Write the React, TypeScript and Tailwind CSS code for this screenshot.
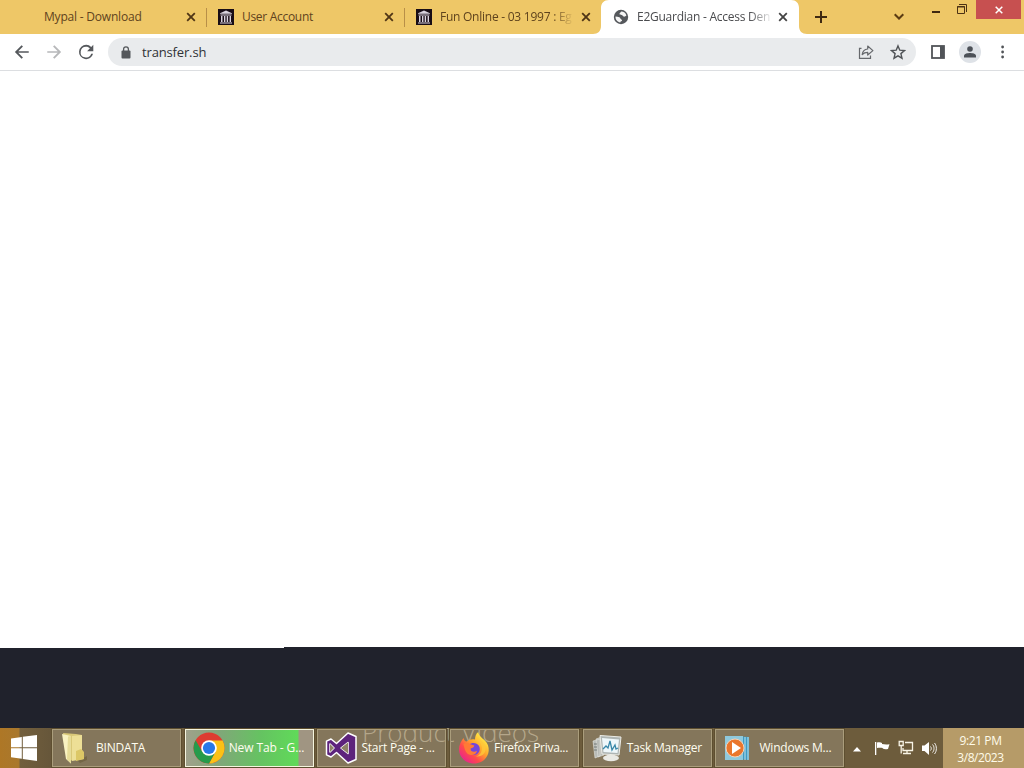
import React from 'react'

const uiFont = 'font-["Open_Sans","Noto_Sans",sans-serif]'

function CloseIcon() {
    return (
        <svg className="h-[10px] w-[10px] shrink-0" viewBox="0 0 10 10">
            <path d="M1.2 1.2l7.6 7.6M8.8 1.2L1.2 8.8" stroke="currentColor" strokeWidth="1.8" fill="none" />
        </svg>
    )
}

function ArchiveIcon() {
    return (
        <svg className="h-4 w-4" viewBox="0 0 16 16">
            <rect width="16" height="16" fill="#180d16" />
            <path d="M2 4.2L8 1.4l6 2.8v.6H2zM2.5 5.5h11v1h-11zM3 7h1.5v6H3zM6 7h1.4v6H6zM8.7 7h1.4v6H8.7zM11.6 7H13v6h-1.4zM2 13.5h12v1H2z" fill="#d9d3df" />
        </svg>
    )
}

function GlobeIcon() {
    return (
        <svg className="h-4 w-4" viewBox="0 0 16 16">
            <circle cx="8" cy="8" r="7.2" fill="#55585c" />
            <path d="M8.2 2.6c2.6 0 4.6 1.6 5.2 3.9-.9.6-1.500 1.300-2.700 1.100-1-.2-1-1.300-2-1.600-1-.4-2 .1-2.200-1 0-1 1.100-1.200 1.700-2.400z" fill="#f5f5f5" />
            <path d="M2.500 7.600c1.400.2 2.600.2 3.800.7 1.300.6 1 1.700 2.100 2.100 1 .5.8 1.600-.2 1.900-.8.2-.8.6-.9 1.200-2.700-.3-5-2.600-4.800-5.900z" fill="#f5f5f5" />
        </svg>
    )
}

function Tab(props: any) {

    const { title, icon, active, divider, textClass } = props

    return (
        <div className={`relative flex h-full shrink-0 items-center ${active ? '-ml-px w-[199px] text-[#4a4b4e]' : 'w-[198px] text-[#5f431d]'}`}>
            {active && (
                <svg className="absolute -left-2 top-0 h-[34px] w-[214px]" viewBox="0 0 214 34">
                    <path d="M0 34c5 0 8-3 8-8V8c0-5 3-8 8-8h182c5 0 8 3 8 8v18c0 5 3 8 8 8z" fill="#fff" />
                </svg>
            )}
            <div className="relative ml-3 h-4 w-4 shrink-0">{icon}</div>
            <div className={`relative ml-2 w-[133px] shrink-0 overflow-hidden whitespace-nowrap text-[12px] leading-4 ${textClass}`}>{title}</div>
            <div className={`relative flex ${active ? 'ml-[8px] text-[#444]' : divider ? 'ml-[9px] text-[#4f3516]' : 'ml-[8px] text-[#4f3516]'}`}><CloseIcon /></div>
            {divider && <div className="absolute -right-px top-2 h-[19px] w-px bg-[#b88f48]"></div>}
        </div>
    )
}

function TabStrip() {
    return (
        <div className="flex h-[34px] bg-[#eec767] pl-2">
            <Tab divider title="Mypal - Download" textClass="tracking-[-0.2px]" />
            <Tab divider title="User Account" icon={<ArchiveIcon />} textClass="tracking-[-0.3px]" />
            <Tab title="Fun Online - 03 1997 : Eg" icon={<ArchiveIcon />} textClass="tracking-[-0.25px] [mask-image:linear-gradient(to_right,#000_112px,transparent_134px)]" />
            <Tab active title="E2Guardian - Access Den" icon={<GlobeIcon />} textClass="tracking-[-0.25px] [mask-image:linear-gradient(to_right,#000_112px,transparent_136px)]" />
            <svg className="ml-[15px] mt-[11px] h-3 w-3 shrink-0" viewBox="0 0 12 12">
                <path d="M6 0v12M0 6h12" stroke="#3f2a12" strokeWidth="2" />
            </svg>
            <svg className="ml-[67px] mt-[13px] h-[8px] w-[10px] shrink-0" viewBox="0 0 10 8">
                <path d="M.7 1.2L5 5.5l4.3-4.3" stroke="#5b3c13" strokeWidth="2" fill="none" />
            </svg>
            <div className="ml-[28px] mt-[11px] h-[2px] w-2 shrink-0 bg-[#3f2811]"></div>
            <svg className="ml-[17px] mt-[4px] h-[10px] w-[10px] shrink-0" viewBox="0 0 10 10">
                <path d="M2 .5h7.5V8" stroke="#4c3214" fill="none" />
                <path d="M.5 2.5h7v7h-7zM0 3h8" stroke="#4c3214" fill="none" />
            </svg>
            <div className="ml-[9px] flex h-[19px] w-[45px] shrink-0 items-center justify-center bg-[#c75050] text-white">
                <svg className="h-[8px] w-[8px]" viewBox="0 0 8 8">
                    <path d="M.7.7l6.6 6.6M7.3.7L.7 7.3" stroke="currentColor" strokeWidth="1.5" />
                </svg>
            </div>
        </div>
    )
}

function Toolbar() {
    return (
        <div className="flex h-[37px] shrink-0 items-center border-b border-[#dcdee1] bg-white pl-[12px]">
            <svg className="h-5 w-5" viewBox="-.6 -.6 25.2 25.2" fill="#55585c">
                <path d="M20.5 11H7.3l5.9-5.9L11.5 3.5 3 12l8.5 8.5 1.7-1.6L7.3 13h13.2z" />
            </svg>
            <svg className="ml-3 h-5 w-5" viewBox="-.6 -.6 25.2 25.2" fill="#b7b8ba">
                <path d="M3.5 11h13.2l-5.9-5.9 1.7-1.6L21 12l-8.5 8.5-1.7-1.6 5.9-5.9H3.5z" />
            </svg>
            <svg className="ml-3 h-5 w-5" viewBox="-.8 -.6 25.2 25.2" fill="#55585c">
                <path d="M18.4 5.6A9 9 0 0012 3a9 9 0 108.7 11.3h-2.4A6.8 6.8 0 1112 5.3c1.9 0 3.5.8 4.7 2L13.2 11H21V3z" />
            </svg>
            <div className="ml-3 flex h-7 w-[808px] items-center rounded-full bg-[#e9ebed] pl-[13px] pr-[10px]">
                <svg className="h-[13px] w-[10px]" viewBox="0 0 10 13">
                    <rect x=".5" y="4.5" width="9" height="8" rx="1" fill="#55585c" />
                    <path d="M2.6 5V3.3a2.4 2.4 0 014.8 0V5" stroke="#55585c" strokeWidth="1.3" fill="none" />
                </svg>
                <span className="ml-[11px] text-[13px] leading-5 tracking-[-0.15px] text-[#303236]">transfer.sh</span>
                <svg className="ml-auto h-4 w-4" viewBox="0 0 16 16" fill="none" stroke="#66686c" strokeWidth="1.2">
                    <path d="M3.5 4.3h-2v10h11v-2.8" />
                    <path d="M4.2 10.5c.5-3.7 2.6-5.3 5.5-5.5V2l5.2 4.6-5.2 4.4V8.3c-2.3 0-4 .6-5.5 2.2z" strokeLinejoin="round" />
                </svg>
                <svg className="ml-4 h-4 w-4" viewBox="0 0 16 16" fill="none" stroke="#505357" strokeWidth="1.4">
                    <path d="M8 1.9l1.8 4.3 4.6.4-3.5 3 1.1 4.6L8 11.8l-4 2.4 1.1-4.6-3.5-3 4.6-.4z" />
                </svg>
            </div>
            <svg className="ml-[15px] h-[14px] w-[14px]" viewBox="0 0 14 14">
                <rect x="1" y="1" width="12" height="12" fill="#fff" stroke="#515458" strokeWidth="1.8" />
                <path d="M9 1h4v12H9z" fill="#515458" />
            </svg>
            <div className="ml-[14px] flex h-[22px] w-[22px] items-center justify-center rounded-full bg-[#dee2e7]">
                <svg className="h-3 w-3" viewBox="0 0 12 12" fill="#4c5158">
                    <circle cx="6" cy="3" r="2.8" />
                    <path d="M0 11.6V9.8C0 7.7 3.8 7 6 7s6 .7 6 2.8v1.8z" />
                </svg>
            </div>
            <svg className="ml-[20px] h-[14px] w-[4px]" viewBox="0 0 4 14" fill="#505357">
                <circle cx="1.6" cy="2" r="1.4" />
                <circle cx="1.6" cy="7" r="1.4" />
                <circle cx="1.6" cy="12" r="1.4" />
            </svg>
        </div>
    )
}

function FolderIcon() {
    return (
        <svg className="h-8 w-8" viewBox="0 0 32 32">
            <path d="M18 29l9-5v4l-7 3z" fill="#695c39" opacity=".6" />
            <path d="M3 1l13 1 6 1v23l-13 3z" fill="#d9c878" />
            <path d="M12 4l10-1v15l2 3v6l-12 2z" fill="#eddf96" />
            <path d="M2 2l9 2v27.5L6 27z" fill="#f9f2c2" />
            <path d="M8 4.5l3-.5v27.5l-4-4z" fill="#e7dc98" />
            <path d="M16 19l5-2 3 3v7l-8 2z" fill="#dcc766" />
        </svg>
    )
}

function ChromeIcon() {
    return (
        <svg className="h-8 w-8" viewBox="0 0 32 32">
            <circle cx="16" cy="16" r="15.5" fill="#dd3d31" />
            <path d="M16 8.5h13.6A15.5 15.5 0 0116 31.5l6.5-11.7z" fill="#fbc116" />
            <path d="M2.6 8.3A15.5 15.5 0 0016 31.5l6.5-11.7L9.1 19.5z" fill="#269b4b" />
            <circle cx="16" cy="16" r="7.8" fill="#fff" />
            <circle cx="16" cy="16" r="6.1" fill="#2878e8" />
        </svg>
    )
}

function VisualStudioIcon() {
    return (
        <svg className="h-8 w-8" viewBox="0 0 32 32">
            <path fillRule="evenodd" d="M23 1l8 3.5v23L23 31l-11.5-10.5L6 25l-4.5-2.2V9.2L6 7l5.5 4.5zM5 12v8l4-4zM23 10.5L16 16l7 5.5z" fill="#5d237c" stroke="#fff" strokeWidth="1.5" strokeLinejoin="round" />
            <path d="M5 12v8l4-4zM23 10.5L16 16l7 5.5z" fill="#8e8268" />
        </svg>
    )
}

function FirefoxIcon() {
    return (
        <svg className="h-8 w-8" viewBox="0 0 32 32">
            <defs>
                <linearGradient id="fox" x1="0.85" y1="0.1" x2="0.15" y2="0.9">
                    <stop offset="0" stopColor="#fff44a" />
                    <stop offset=".4" stopColor="#ffa52b" />
                    <stop offset=".7" stopColor="#ff4a4b" />
                    <stop offset="1" stopColor="#e9258c" />
                </linearGradient>
            </defs>
            <path d="M5.5 6c.4 2 1.6 3.2 3.2 3.6C11 7.5 14 7 17 7.6c0-3 .8-5.6 3.2-7.6.6 4 4 5.8 6.6 8.6 3 3 4.2 6.5 3.900 10.200C30.100 26.200 23.900 31.500 16 31.500S1 25.300 1 17.500c0-4.600 2-8.500 4.500-11.500z" fill="url(#fox)" />
            <path d="M11 12.500c3-2.500 8-2 10 1.500 2.200 4.200-.5 9-5.500 9-4 0-6.500-2.500-6.500-5.500 0-2 .8-3.700 2-5z" fill="#7446db" />
            <path d="M5.500 12c2.200-1.600 5-1.200 6.800.2l4 1.400c-.3 1.800-1.800 2.400-3.600 2.900-.7 3.200 3.400 4.200 6.300 2.300-.8 3.600-4 4.900-7.200 4-4-1.100-5.300-5.400-6.300-10.800z" fill="#ff7a35" />
            <path d="M19 5c.5 3.500 5 6 5 11 0 4.500-2.500 7.500-6 8.500 6.500.5 10.500-4 9.500-9.500C26.500 10 21.500 9 19 5z" fill="#ffc83a" opacity=".8" />
        </svg>
    )
}

function TaskManagerIcon() {
    return (
        <svg className="h-8 w-8" viewBox="0 0 32 32">
            <path d="M2 9l7-2v17l-5 2zM5 7l8-3v19l-6 2z" fill="#b8bbb7" stroke="#e2e4df" strokeWidth=".6" />
            <path d="M3 12h3M3 15h3M3 18h3" stroke="#5f6865" strokeWidth=".8" />
            <path d="M9 3.500l21 1.500-2 18-17-1z" fill="#aeb5b4" stroke="#ecece6" />
            <path d="M11 6l17 1.500-1.500 13.500L12.500 20z" fill="#eef7fa" />
            <path d="M12 17l3-3 2 2 2-7 2 9 3-5 1 4 2-1" fill="none" stroke="#3988a9" strokeWidth="1.3" />
            <path d="M16 23h8l1 3H15z" fill="#c8c9c6" />
            <ellipse cx="20" cy="26" rx="8" ry="3.200" fill="#e9e9e4" />
        </svg>
    )
}

function MediaPlayerIcon() {
    return (
        <svg className="h-8 w-8" viewBox="0 0 32 32">
            <path d="M12 4l14 1v23l-12-1z" fill="#3d9ac3" />
            <path d="M22 5v23M25 5v23" stroke="#c2e4ef" strokeWidth="1" />
            <path d="M2 4h18v24H2z" fill="#8fc9dd" />
            <circle cx="12" cy="16" r="9" fill="#ea762c" stroke="#f6d3b8" />
            <path d="M9 10l9 6-9 6z" fill="#fff" />
        </svg>
    )
}

const tasks = [
    { title: 'BINDATA', icon: <FolderIcon />, gap: 'ml-[4px]', track: 'tracking-[-0.2px]' },
    { title: 'New Tab - G...', icon: <ChromeIcon />, gap: 'ml-[4px]', track: 'tracking-[-0.1px]', active: true },
    { title: 'Start Page - ...', icon: <VisualStudioIcon />, gap: 'ml-[4px]', track: 'tracking-[-0.2px]' },
    { title: 'Firefox Priva...', icon: <FirefoxIcon />, gap: 'ml-[4px]', track: 'tracking-[-0.3px]' },
    { title: 'Task Manager', icon: <TaskManagerIcon />, gap: 'ml-[4px]', track: 'tracking-[-0.25px]' },
    { title: 'Windows M...', icon: <MediaPlayerIcon />, gap: 'ml-[4px]', track: 'tracking-[-0.2px]' },
]

function Taskbar() {
    return (
        <div className="relative flex h-10 shrink-0 overflow-hidden bg-[#6d5c3c]">
            {/* faint page text showing through the glass */}
            <div className="pointer-events-none absolute left-[362px] top-[-12px] whitespace-nowrap text-[26px] font-light leading-8 text-[#c0b18e]/70">Product Videos</div>
            <div className="flex w-[52px] shrink-0 items-center bg-[linear-gradient(to_right,#ae7726_0px,#a9782d_19px,#725f3d_20px,#66563a_52px)] pl-[11px]">
                <svg className="h-[26px] w-[26px]" viewBox="0 0 26 26" fill="#fff">
                    <path d="M0 3.6L10.8 2v10.3H0zM11.8 1.8L26 0v12.3H11.8zM0 13.3h10.8v10.4L0 22.2zM11.8 13.3H26V26l-14.2-2z" />
                </svg>
            </div>
            <div className="relative flex shrink-0 gap-[3.7px] pt-px">
                {tasks.map((item: any, index: number) => (
                    <div
                        key={index}
                        className={`flex h-[38px] w-[129px] items-center border pl-[7px] shadow-[0_0_0_1px_#5e4f30] ${item.active ? 'border-[#f5f5de] bg-[linear-gradient(to_right,#a0a18b_0px,#7fa878_35px,#65c361_75px,#60da59_112px,#a09582_113px)]' : 'border-[#aa9d7c] bg-white/16'}`}
                    >
                        <div className="h-8 w-8 shrink-0">{item.icon}</div>
                        <span className={`whitespace-nowrap text-[12px] leading-4 text-[#fffdf0] ${item.gap} ${item.track}`}>{item.title}</span>
                    </div>
                ))}
            </div>
            <div className="ml-auto flex h-full items-center">
                <svg className="mt-[2px] h-[5px] w-2" viewBox="0 0 8 5"><path d="M4 0l4 4.5H0z" fill="#fff" /></svg>
                <svg className="ml-[13px] h-4 w-4" viewBox="0 0 16 16" fill="#fff">
                    <path d="M1 2h1.3v13H1zM3 2.5c2.5-.5 4-.2 5 .5v1c2 .4 4.500.6 7.500.2L14 9c-2.500.5-4 .3-5.300-.5V8C7 7.500 5 7.500 3 8z" />
                </svg>
                <svg className="ml-[8px] h-4 w-4" viewBox="0 0 16 16" fill="none" stroke="#f8f4e6" strokeWidth="1.3">
                    <path d="M7 2.5h7.5v8H5V8M5 13.5h8M9 11v2.5M1.2 1.5h4v4h-4zM3.2 6v7.5" />
                </svg>
                <svg className="ml-[8px] h-4 w-4" viewBox="0 0 16 16" fill="none" stroke="#fff">
                    <path d="M0 5.5h2.5L7 2v13l-4.5-4H0z" fill="#fff" stroke="none" />
                    <path d="M8.5 6.5c1 1 1 3 0 4M10.5 4.5c2 2 2 6 0 8M12.500 3c2.500 3 2.500 8 0 11" strokeWidth=".9" />
                </svg>
                <div className="ml-[5px] flex h-full w-[81px] flex-col items-center justify-center bg-[#b69b68] pr-[6px] pt-[2px] text-[12px] leading-[17px] text-[#fffbea]">
                    <span className="tracking-[-0.4px]">9:21 PM</span>
                    <span className="tracking-[-0.45px]">3/8/2023</span>
                </div>
            </div>
        </div>
    )
}

export default function App() {
    return (
        <div className={`flex h-[768px] w-[1024px] flex-col overflow-hidden bg-white ${uiFont}`}>
            <TabStrip />
            <Toolbar />
            <div className="min-h-0 flex-1 bg-white"></div>
            <div className="flex h-[81px] shrink-0 bg-[#20222c]">
                <div className="h-px w-[284px] bg-white"></div>
            </div>
            <Taskbar />
        </div>
    )
}
